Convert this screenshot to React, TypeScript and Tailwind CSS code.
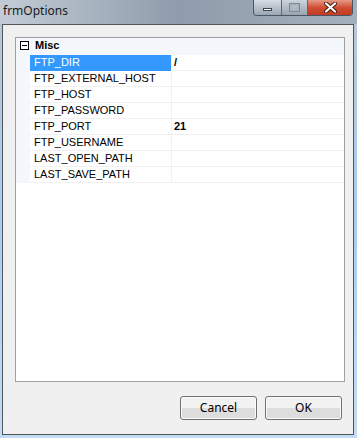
import React from 'react'

// --- Data ---

interface Prop {
  name: string
  value: string
}

const PROPS: Prop[] = [
  { name: 'FTP_DIR', value: '/' },
  { name: 'FTP_EXTERNAL_HOST', value: '' },
  { name: 'FTP_HOST', value: '' },
  { name: 'FTP_PASSWORD', value: '' },
  { name: 'FTP_PORT', value: '21' },
  { name: 'FTP_USERNAME', value: '' },
  { name: 'LAST_OPEN_PATH', value: '' },
  { name: 'LAST_SAVE_PATH', value: '' },
]

function CaptionButtons() {
  return (
    <div className="absolute top-0 right-[4px] flex h-[16px] rounded-b-[4px] border border-t-0 border-[#4a5563] overflow-hidden">
      <div className="w-[28px] h-full flex items-center justify-center bg-gradient-to-b from-[#d6dde5] to-[#9aa6b3] border-r border-[#5c6774]">
        <div className="w-[9px] h-[3px] mt-[4px] bg-white border border-[#3a4450]" />
      </div>
      <div className="w-[26px] h-full flex items-center justify-center bg-gradient-to-b from-[#ccd4dd] to-[#98a4b1] border-r border-[#5c6774]">
        <div className="w-[9px] h-[7px] border-[2px] border-[#aab4bf] shadow-[0_0_0_1px_#7d8894]" />
      </div>
      <div className="w-[44px] h-full flex items-center justify-center bg-gradient-to-b from-[#e59a86] via-[#cf4d33] to-[#c23a22]">
        <svg width="13" height="11" viewBox="0 0 13 11">
          <path d="M2 1.5 L11 9.5 M11 1.5 L2 9.5" stroke="#3b1a14" strokeWidth="4" strokeLinecap="round" />
          <path d="M2 1.5 L11 9.5 M11 1.5 L2 9.5" stroke="#ffffff" strokeWidth="2.2" strokeLinecap="round" />
        </svg>
      </div>
    </div>
  )
}

function PropertyGrid() {
  return (
    <div className="w-[330px] h-[345px] border border-[#a0a0a0] bg-white flex flex-col font-['Liberation_Sans',Arial,sans-serif] text-[11px] text-black">
      {/* Category */}
      <div className="flex h-[17px] bg-[#f4f7fc]">
        <div className="w-[14px] flex items-start justify-center pt-[3px] pl-[2px]">
          <div className="w-[9px] h-[9px] border border-black flex items-center justify-center bg-white">
            <div className="w-[5px] h-[1px] bg-black" />
          </div>
        </div>
        <div className="pl-[5px] font-bold leading-[15px]">Misc</div>
      </div>
      {PROPS.map((p, i) => (
        <div key={p.name} className="flex h-[16px]">
          <div className="w-[14px] bg-[#f4f7fc]" />
          <div
            className={
              i === 0
                ? 'w-[141px] pl-[4px] leading-[15px] bg-[#3399ff] text-white border-b border-[#3399ff]'
                : 'w-[141px] pl-[4px] leading-[15px] border-b border-[#f0f0f0]'
            }
          >
            {p.name}
          </div>
          <div className="w-[1px] bg-[#f0f0f0]" />
          <div className="flex-1 pl-[2px] leading-[15px] font-bold border-b border-[#f0f0f0]">{p.value}</div>
        </div>
      ))}
    </div>
  )
}

function Button({ label }: { label: string }) {
  return (
    <button className="w-[77px] h-[24px] rounded-[3px] border border-[#707070] bg-gradient-to-b from-[#f2f2f2] from-50% to-[#dddddd] to-50% shadow-[inset_0_0_0_1px_#fcfcfc] text-[12px] text-black font-['Noto_Sans',sans-serif] leading-none">
      {label}
    </button>
  )
}

export default function App() {
  return (
    <div className="relative w-[357px] h-[438px] bg-gradient-to-b from-[#b9c6d3] via-[#a9cdee] to-[#c4dcf3] overflow-hidden">
      {/* Title bar */}
      <div className="h-[24px] flex items-center pl-[3px] bg-gradient-to-r from-[#c3ccd6] via-[#8e9cab] to-[#a3b0bd]">
        <span className="text-[12px] text-[#1a1a1a] font-['Noto_Sans',sans-serif] leading-none -mt-[2px]">frmOptions</span>
      </div>
      <CaptionButtons />

      {/* Client area */}
      <div className="ml-[2px] mr-[3px] h-[411px] border border-[#50565c] bg-[#f0f0f0] flex flex-col">
        <div className="pt-[12px] pl-[12px]">
          <PropertyGrid />
        </div>
        <div className="flex justify-end gap-[8px] pr-[11px] pt-[14px]">
          <Button label="Cancel" />
          <Button label="OK" />
        </div>
      </div>
    </div>
  )
}
